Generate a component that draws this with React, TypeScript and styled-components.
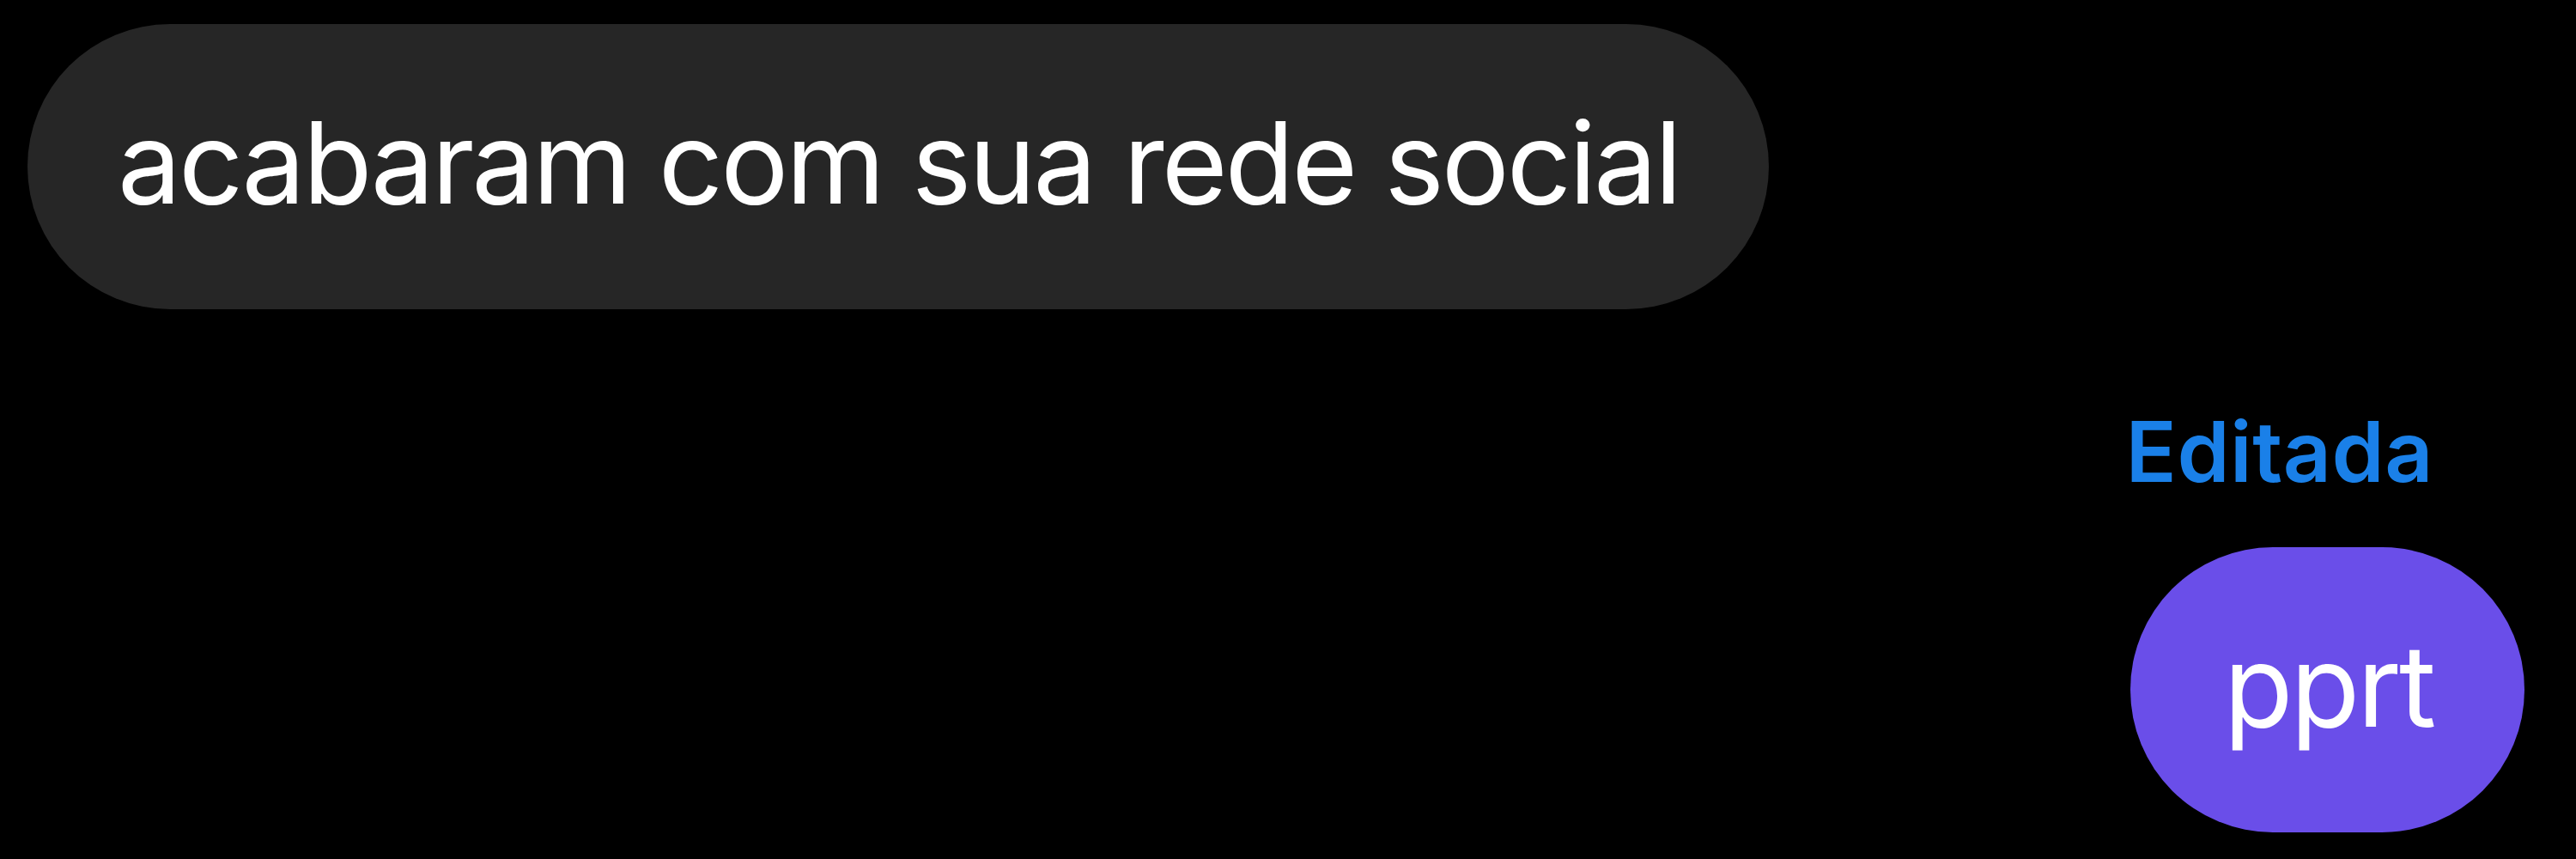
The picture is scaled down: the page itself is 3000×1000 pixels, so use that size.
import React from "react";
import styled, { createGlobalStyle } from "styled-components";

const GlobalStyle = createGlobalStyle`
  html, body {
    margin: 0;
    padding: 0;
    background: #000000;
  }
  body {
    width: 3000px;
    height: 1000px;
    overflow: hidden;
    font-family: Inter, "Liberation Sans", sans-serif;
  }
`;

const Thread = styled.div`
  display: flex;
  flex-direction: column;
  padding: 28px 60px 0 32px;
  width: 3000px;
  height: 1000px;
  box-sizing: border-box;
  background: #000000;
`;

const Row = styled.div<{ $mine?: boolean }>`
  display: flex;
  justify-content: ${(p) => (p.$mine ? "flex-end" : "flex-start")};
`;

const Bubble = styled.div<{ $mine?: boolean }>`
  display: flex;
  align-items: center;
  box-sizing: border-box;
  height: 332px;
  padding: 0 ${(p) => (p.$mine ? "106px" : "104px")} 10px
    ${(p) => (p.$mine ? "109px" : "105px")};
  border-radius: 166px;
  background: ${(p) => (p.$mine ? "#6a4ee9" : "#262626")};
  color: #ffffff;
  font-family: Inter, "Liberation Sans", sans-serif;
  font-size: 132px;
  font-weight: 400;
  line-height: 160px;
  letter-spacing: -3.1px;
  white-space: nowrap;
`;

const EditedLabel = styled.div`
  align-self: flex-end;
  margin: 106px 106px 0 0;
  height: 171px;
  color: #1a80e8;
  font-family: Inter, "Liberation Sans", sans-serif;
  font-size: 98px;
  font-weight: 600;
  line-height: 120px;
  letter-spacing: 0.5px;
`;

export default function App() {
  return (
    <>
      <GlobalStyle />
      <Thread>
        <Row>
          <Bubble>acabaram com sua rede social</Bubble>
        </Row>
        <EditedLabel>Editada</EditedLabel>
        <Row $mine>
          <Bubble $mine>pprt</Bubble>
        </Row>
      </Thread>
    </>
  );
}
